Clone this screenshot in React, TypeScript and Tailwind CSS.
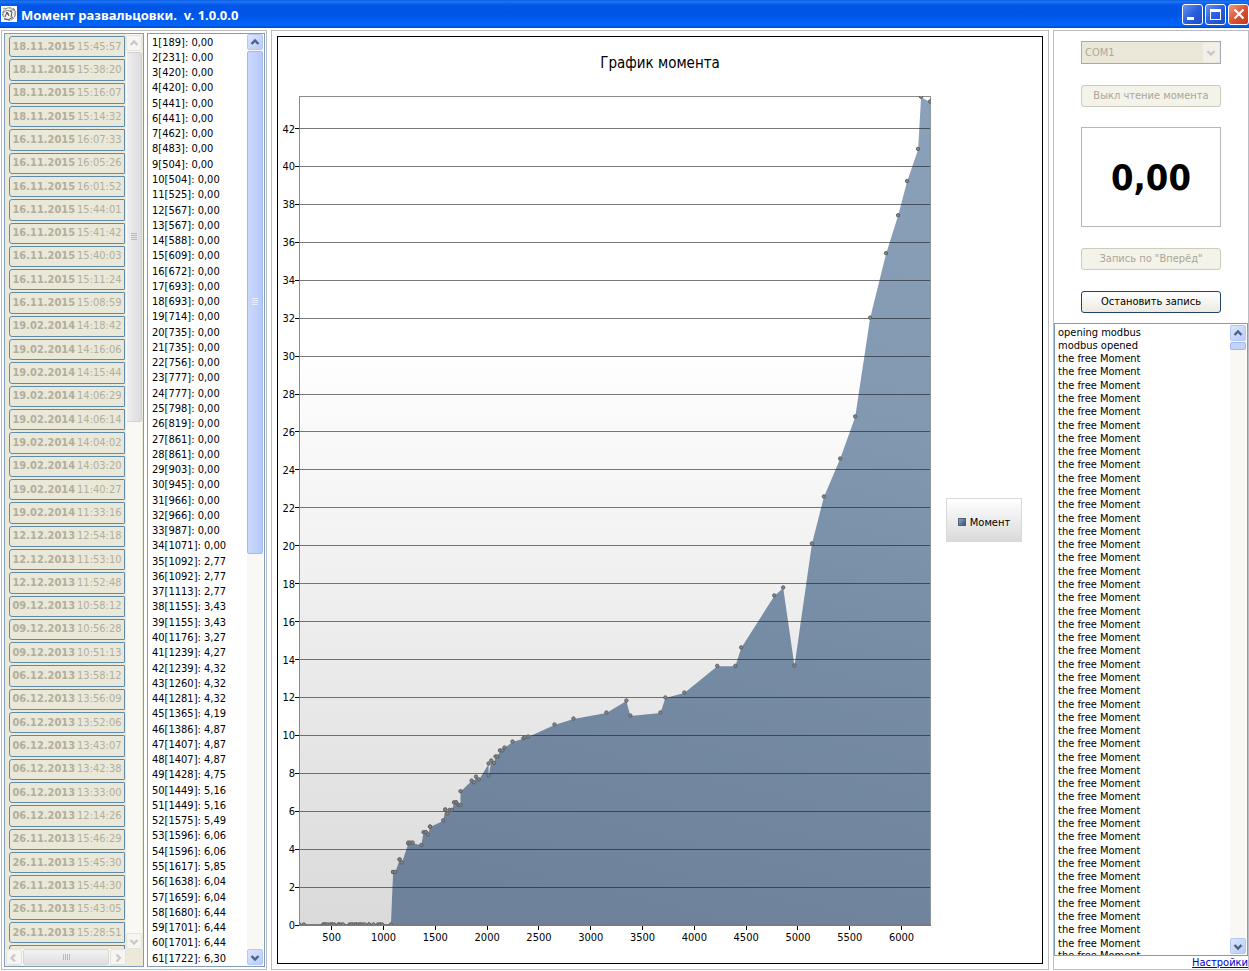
import type { ReactNode } from "react";

const SESSIONS = [
  "18.11.2015 15:45:57", "18.11.2015 15:38:20", "18.11.2015 15:16:07", "18.11.2015 15:14:32",
  "16.11.2015 16:07:33", "16.11.2015 16:05:26", "16.11.2015 16:01:52", "16.11.2015 15:44:01",
  "16.11.2015 15:41:42", "16.11.2015 15:40:03", "16.11.2015 15:11:24", "16.11.2015 15:08:59",
  "19.02.2014 14:18:42", "19.02.2014 14:16:06", "19.02.2014 14:15:44", "19.02.2014 14:06:29",
  "19.02.2014 14:06:14", "19.02.2014 14:04:02", "19.02.2014 14:03:20", "19.02.2014 11:40:27",
  "19.02.2014 11:33:16", "12.12.2013 12:54:18", "12.12.2013 11:53:10", "12.12.2013 11:52:48",
  "09.12.2013 10:58:12", "09.12.2013 10:56:28", "09.12.2013 10:51:13", "06.12.2013 13:58:12",
  "06.12.2013 13:56:09", "06.12.2013 13:52:06", "06.12.2013 13:43:07", "06.12.2013 13:42:38",
  "06.12.2013 13:33:00", "06.12.2013 12:14:26", "26.11.2013 15:46:29", "26.11.2013 15:45:30",
  "26.11.2013 15:44:30", "26.11.2013 15:43:05", "26.11.2013 15:28:51",
];

type Sample = [time: number, moment: number];

const SAMPLES: Sample[] = [
  [189, 0], [231, 0], [420, 0], [420, 0], [441, 0], [441, 0], [462, 0], [483, 0], [504, 0], [504, 0],
  [525, 0], [567, 0], [567, 0], [588, 0], [609, 0], [672, 0], [693, 0], [693, 0], [714, 0], [735, 0],
  [735, 0], [756, 0], [777, 0], [777, 0], [798, 0], [819, 0], [861, 0], [861, 0], [903, 0], [945, 0],
  [966, 0], [966, 0], [987, 0], [1071, 0], [1092, 2.77], [1092, 2.77], [1113, 2.77], [1155, 3.43],
  [1155, 3.43], [1176, 3.27], [1239, 4.27], [1239, 4.32], [1260, 4.32], [1281, 4.32], [1365, 4.19],
  [1386, 4.87], [1407, 4.87], [1407, 4.87], [1428, 4.75], [1449, 5.16], [1449, 5.16], [1575, 5.49],
  [1596, 6.06], [1596, 6.06], [1617, 5.85], [1638, 6.04], [1659, 6.04], [1680, 6.44], [1701, 6.44],
  [1701, 6.44], [1722, 6.3], [1743, 6.3], [1743, 7.03], [1850, 7.59], [1871, 7.5], [1892, 7.8],
  [1920, 7.65], [2014, 8.49], [2014, 7.85], [2040, 8.65], [2066, 8.52], [2081, 8.86], [2100, 8.86],
  [2123, 9.18], [2148, 9.18], [2168, 9.33], [2245, 9.65], [2350, 9.82], [2366, 9.88], [2396, 9.91],
  [2650, 10.55], [2833, 10.86], [3151, 11.18], [3344, 11.81], [3382, 11.02], [3672, 11.18],
  [3720, 11.97], [3903, 12.23], [4221, 13.64], [4395, 13.64], [4452, 14.61], [4771, 17.35],
  [4857, 17.77], [4966, 13.66], [5134, 20.09], [5250, 22.57], [5407, 24.57], [5552, 26.79],
  [5696, 32], [5850, 35.4], [5966, 37.4], [6053, 39.2], [6159, 40.9], [6188, 43.65], [6275, 43.4],
];

const LISTED = SAMPLES.slice(0, 61);
const LOG = ["opening modbus", "modbus opened", ...Array<string>(45).fill("the free Moment")];

const fmt = (n: number) => n.toFixed(2).replace(".", ",");

function Chevron({ dir, className }: { dir: "up" | "down" | "left" | "right"; className: string }) {
  const d = {
    up: "M1.5 6 L5 2.5 L8.5 6",
    down: "M1.5 3 L5 6.5 L8.5 3",
    left: "M6 1.5 L2.5 5 L6 8.5",
    right: "M3.5 1.5 L7 5 L3.5 8.5",
  }[dir];
  return (
    <svg viewBox="0 0 10 9" className={className} aria-hidden="true">
      <path d={d} fill="none" stroke="currentColor" strokeWidth="2.4" />
    </svg>
  );
}

function ScrollButton({ dir, label, disabled }: { dir: "up" | "down" | "left" | "right"; label: string; disabled?: boolean }) {
  return (
    <button
      type="button"
      aria-label={label}
      disabled={disabled}
      className={
        "flex size-4 shrink-0 items-center justify-center rounded-xs border " +
        (disabled
          ? "border-[#e4e3dc] bg-[#f6f5f2] text-[#cbcac6]"
          : "border-[#b4c8f6] bg-linear-to-br from-[#dbe5fd] to-[#b9cbf9] text-[#4d6185]")
      }
    >
      <Chevron dir={dir} className="h-[9px] w-[10px]" />
    </button>
  );
}

function Grip({ className }: { className: string }) {
  return (
    <svg viewBox="0 0 6 8" className={className} aria-hidden="true">
      <path d="M0 .5h6M0 2.5h6M0 4.5h6M0 6.5h6" stroke="currentColor" />
    </svg>
  );
}

function Fieldset({ className, children }: { className: string; children: ReactNode }) {
  return <section className={"border border-[#b9bec4] " + className}>{children}</section>;
}

function TitleBar() {
  return (
    <header className="flex h-7 shrink-0 items-center bg-[linear-gradient(to_bottom,#0a5fe0_0%,#1c74f4_6%,#0257e8_18%,#0054e3_50%,#0061f6_80%,#0064fb_90%,#0046c8_100%)] pl-px text-white">
      <svg viewBox="0 0 16 16" className="size-4 bg-white" aria-hidden="true">
        <circle cx="8" cy="8" r="6.2" fill="#f0f0f0" stroke="#666" strokeWidth="1" strokeDasharray="3 1" />
        <path d="M1 9 Q4 3 9 5 Q13 2 15 6" fill="none" stroke="#888" />
        <path d="M4 11 L6 6 L8 10 M9 5 L11 6 L10 11 M6 8 H8 M3 13 Q8 15 12 11" fill="none" stroke="#444" strokeWidth="0.9" />
        <path d="M12 2 L14 4 M2 3 L4 2" stroke="#888" />
      </svg>
      <h1 className="ml-1 flex-1 whitespace-pre pt-0.5 font-['Noto_Sans',sans-serif] text-[13px] font-bold leading-5">
        {"Момент развальцовки.  v. 1.0.0.0"}
      </h1>
      <div className="flex gap-0.5">
        <button type="button" aria-label="Свернуть" className="flex size-[21px] items-end justify-start rounded-[3px] border border-white bg-linear-to-br from-[#6a93ec] via-[#2a5fdf] to-[#1c4bc6] pb-1 pl-1">
          <span className="h-[3px] w-[7px] bg-white" />
        </button>
        <button type="button" aria-label="Развернуть" className="flex size-[21px] items-center justify-center rounded-[3px] border border-white bg-linear-to-br from-[#6a93ec] via-[#2a5fdf] to-[#1c4bc6]">
          <span className="h-[11px] w-[11px] border border-t-[3px] border-white" />
        </button>
        <button type="button" aria-label="Закрыть" className="flex size-[21px] items-center justify-center rounded-[3px] border border-white bg-linear-to-br from-[#ee9a80] via-[#dd5233] to-[#c23a1c]">
          <svg viewBox="0 0 12 12" className="size-3" aria-hidden="true">
            <path d="M1.5 1.5 L10.5 10.5 M10.5 1.5 L1.5 10.5" stroke="#fff" strokeWidth="2.2" />
          </svg>
        </button>
      </div>
    </header>
  );
}

function SessionList() {
  return (
    <div className="flex w-[140px] flex-col border border-[#7f9db9] bg-[#ece9d8] pb-px">
      <div className="flex min-h-0 flex-1">
        <div className="flex w-[121px] flex-col overflow-hidden pl-1 pr-px pt-[2px]">
          <div className="flex flex-1 flex-col">
            {SESSIONS.map((s) => {
              const [date, time] = s.split(" ");
              return (
                <div key={s} className="flex min-h-0 flex-1 basis-0 pb-0.5">
                  <button type="button" disabled className="flex h-full w-full items-center justify-center gap-0.5 whitespace-nowrap rounded-l-[3px] rounded-r-[1px] border border-[#5f8bab] bg-[#eae8d9] leading-3 text-[#b2ae9c]">
                    <b>{date}</b>
                    <span>{time}</span>
                  </button>
                </div>
              );
            })}
          </div>
          <div className="h-1 shrink-0 rounded-tl-[3px] border border-b-0 border-[#5f8bab]" />
        </div>
        <div className="flex w-4 flex-col bg-[#f9f8f5] pt-px">
          <ScrollButton dir="up" label="Вверх" disabled />
          <div className="min-h-0 flex-1 pt-px">
            <div className="flex h-[42%] items-center justify-center rounded-xs border border-[#d3d2cf] border-l-white bg-linear-to-r from-[#efeff1] to-[#dcdce0] text-[#b9b9c0]">
              <Grip className="h-2 w-1.5" />
            </div>
          </div>
          <ScrollButton dir="down" label="Вниз" disabled />
        </div>
      </div>
      <div className="flex">
        <div className="flex w-[121px] bg-[#f9f8f5] pl-px">
          <ScrollButton dir="left" label="Влево" disabled />
          <div className="mx-px flex flex-1 items-center justify-center rounded-xs border border-[#d8d7d2] bg-linear-to-b from-[#f3f3f4] to-[#dedee1] text-[#b9b9c0]">
            <Grip className="h-2 w-1.5 rotate-90" />
          </div>
          <ScrollButton dir="right" label="Вправо" disabled />
        </div>
      </div>
    </div>
  );
}

function SampleList() {
  return (
    <div className="flex w-[118px] border border-[#7f9db9] bg-white">
      <ol className="flex flex-1 flex-col pl-1 pt-px">
        {LISTED.map(([t, m], i) => (
          <li key={i} className="flex min-h-0 flex-1 basis-0 items-center whitespace-nowrap leading-3">
            {`${i + 1}[${t}]: ${fmt(m)}`}
          </li>
        ))}
      </ol>
      <div className="mr-px flex w-4 flex-col bg-[#f9f8f4] pb-px">
        <ScrollButton dir="up" label="Вверх" />
        <div className="min-h-0 flex-1 pt-px">
          <div className="flex h-[56%] items-center justify-center rounded-xs border border-[#a3b9ee] bg-linear-to-r from-[#cbd8fc] to-[#b7c9fa] text-[#e9effe]">
            <Grip className="h-2 w-1.5" />
          </div>
        </div>
        <ScrollButton dir="down" label="Вниз" />
      </div>
    </div>
  );
}

const PLOT = { left: 21.5, right: 652.5, top: 19.5, bottom: 848 };
const px = (t: number) => PLOT.left + ((t - 189) * (PLOT.right - PLOT.left)) / 6090;
const py = (m: number) => PLOT.bottom - m * 18.964;
const Y_TICKS = Array.from({ length: 22 }, (_, i) => i * 2);
const X_TICKS = Array.from({ length: 12 }, (_, i) => (i + 1) * 500);

function MomentChart() {
  const outline = SAMPLES.map(([t, m]) => `${px(t).toFixed(1)},${py(m).toFixed(1)}`).join(" ");
  const snap = (n: number) => Math.floor(n) + 0.5;
  return (
    <svg viewBox="0 0 668 886" className="h-full min-w-0 flex-1" role="img" aria-label="График момента">
      <defs>
        <linearGradient id="plot" x1="0" y1="0" x2="0" y2="1">
          <stop offset="0.3" stopColor="#ffffff" />
          <stop offset="1" stopColor="#dadada" />
        </linearGradient>
        <linearGradient id="area" gradientUnits="userSpaceOnUse" x1="600" y1="20" x2="400" y2="848">
          <stop offset="0" stopColor="#8ba0b9" />
          <stop offset="0.35" stopColor="#8399b2" />
          <stop offset="0.65" stopColor="#768ba4" />
          <stop offset="1" stopColor="#6e829b" />
        </linearGradient>
        <clipPath id="plotClip">
          <rect x="21" y="19" width="632" height="829" />
        </clipPath>
      </defs>
      <rect x={PLOT.left} y={PLOT.top} width={PLOT.right - PLOT.left} height={PLOT.bottom - PLOT.top} fill="url(#plot)" stroke="#8b8b8b" />
      <polygon
        points={`${outline} ${PLOT.right},${py(43.4)} ${PLOT.right},${PLOT.bottom} ${PLOT.left},${PLOT.bottom}`}
        fill="url(#area)"
      />
      {Y_TICKS.map((v) => (
        <g key={v}>
          {v > 0 && <line x1={PLOT.left} x2={PLOT.right} y1={snap(py(v))} y2={snap(py(v))} stroke="#14181e" strokeOpacity="0.58" />}
          <line x1="17" x2="21" y1={snap(py(v))} y2={snap(py(v))} stroke="#000" />
          <text x="17" y={Math.round(py(v)) + 4} textAnchor="end">{v}</text>
        </g>
      ))}
      <line x1="652.5" x2="652.5" y1="20" y2="848" stroke="#8f989f" />
      <line x1="21" x2="653" y1="848" y2="848" stroke="#7a7c7f" strokeWidth="2" />
      {X_TICKS.map((v) => (
        <g key={v}>
          <line x1={snap(px(v))} x2={snap(px(v))} y1="849" y2="853" stroke="#000" />
          <text x={px(v)} y="864" textAnchor="middle">{v}</text>
        </g>
      ))}
      <g clipPath="url(#plotClip)">
        {SAMPLES.map(([t, m], i) => (
          <circle key={i} cx={px(t)} cy={py(m) - 0.5} r="1.7" fill="#7f8790" stroke="#606060" strokeWidth="1" />
        ))}
      </g>
    </svg>
  );
}

function ChartPanel() {
  return (
    <Fieldset className="flex min-w-0 flex-1 p-[5px]">
      <figure className="flex min-w-0 flex-1 flex-col border border-black bg-white">
        <figcaption className="h-10 shrink-0 pt-4 text-center text-[15px] leading-5">График момента</figcaption>
        <div className="flex min-h-0 flex-1 items-center">
          <MomentChart />
          <div className="mr-5 flex h-11 w-19 items-center justify-center gap-1 border border-[#d9d9d9] bg-linear-to-b from-white to-[#dadada] pt-1.5 leading-3">
            <span className="mb-0.5 size-2 border border-[#4c5f78] bg-linear-to-br from-[#8ea6c4] to-[#3f5573]" />
            Момент
          </div>
        </div>
      </figure>
    </Fieldset>
  );
}

function ControlPanel() {
  return (
    <Fieldset className="flex w-[196px] flex-col pt-[10px]">
      <div className="flex flex-col items-stretch px-[27px]">
        <div className="relative">
          <select disabled aria-label="Порт" className="block h-[23px] w-full appearance-none border border-[#a2acb1] bg-[#ebe8da] pl-[3px] leading-4 text-[#aca899] opacity-100">
            <option>COM1</option>
          </select>
          <span className="pointer-events-none absolute inset-y-0.5 right-0.5 flex w-4 items-center justify-center rounded-xs bg-[#f1f0ec] text-[#c9c7bf]">
            <Chevron dir="down" className="h-[9px] w-[10px]" />
          </span>
        </div>
        <button type="button" disabled className="mt-[21px] h-[22px] rounded-[3px] border border-[#cdcbbb] bg-[#f4f3ea] leading-4 text-[#a9a697]">
          Выкл чтение момента
        </button>
        <output className="mt-5 flex h-[100px] items-center justify-center border border-[#b5b8ba] pt-0.5 text-[36px] font-bold leading-none">
          0,00
        </output>
        <button type="button" disabled className="mt-[21px] h-[22px] rounded-[3px] border border-[#cdcbbb] bg-[#f4f3ea] leading-4 text-[#a9a697]">
          Запись по "Вперёд"
        </button>
        <button type="button" className="mt-[21px] h-[22px] rounded-[3px] border border-[#1f4467] bg-linear-to-b from-white to-[#eceae0] leading-4">
          Остановить запись
        </button>
      </div>
      <div className="mt-[10px] flex min-h-0 flex-1 border border-[#7f9db9] bg-white">
        <div className="flex flex-1 flex-col overflow-hidden pl-[3px] pt-[2px]" role="log">
          <div className="flex flex-1 flex-col">
            {LOG.map((line, i) => (
              <p key={i} className="flex min-h-0 flex-1 basis-0 items-center whitespace-nowrap leading-3">{line}</p>
            ))}
          </div>
          <p className="h-[5px] shrink-0 overflow-hidden leading-3">the free Moment</p>
        </div>
        <div className="mr-px flex w-4 flex-col bg-[#f9f8f4] py-px">
          <ScrollButton dir="up" label="Вверх" />
          <div className="min-h-0 flex-1 pt-px">
            <div className="h-2 rounded-xs border border-[#a3b9ee] bg-[#c4d3fb]" />
          </div>
          <ScrollButton dir="down" label="Вниз" />
        </div>
      </div>
      <a href="#settings" className="self-end leading-[13px] text-[#0000c8] underline">Настройки</a>
    </Fieldset>
  );
}

export default function App() {
  return (
    <div className="flex h-screen flex-col bg-white font-['DejaVu_Sans_Condensed','Noto_Sans',sans-serif] text-[11px] text-black">
      <TitleBar />
      <main className="flex min-h-0 flex-1 pb-px pl-px pt-0.5">
        <Fieldset className="mr-1 flex gap-[3px] p-0.5 pr-px">
          <SessionList />
          <SampleList />
        </Fieldset>
        <ChartPanel />
        <div className="w-1 shrink-0" />
        <ControlPanel />
      </main>
    </div>
  );
}
